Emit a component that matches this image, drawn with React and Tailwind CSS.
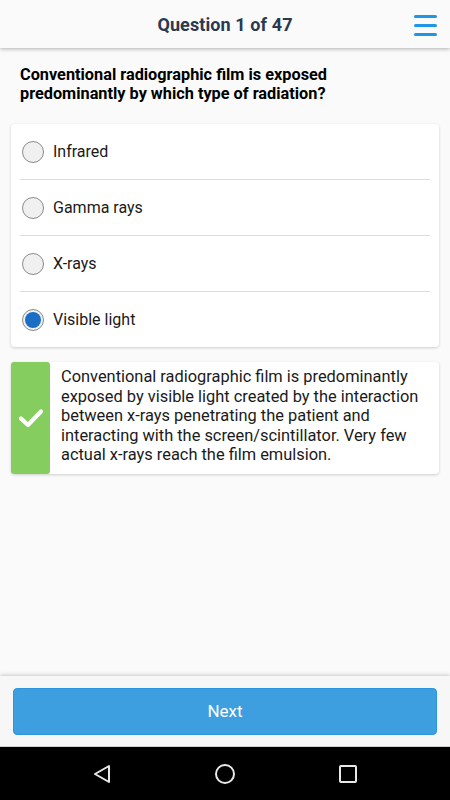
import React from "react";

const options = ["Infrared", "Gamma rays", "X-rays", "Visible light"];

function Radio({ checked }) {
  return (
    <div className="w-[22px] h-[22px] rounded-full border border-[#8a8a8a] bg-[#f0f0f0] flex items-center justify-center shrink-0">
      {checked && <div className="w-[16px] h-[16px] rounded-full bg-[#1a6fc4]" />}
    </div>
  );
}

export default function App() {
  return (
    <div className="w-[450px] h-[800px] flex flex-col bg-[#fafafa] overflow-hidden" style={{ fontFamily: "Roboto, 'Noto Sans', sans-serif" }}>
      <div className="h-[48px] shrink-0 relative flex items-center justify-center bg-[#fafafa] shadow-[0_1px_4px_rgba(0,0,0,0.3)] z-10">
        <span className="text-[18px] font-bold text-[#2a3850] tracking-[0.1px]">Question 1 of 47</span>
        <div className="absolute right-[13px] top-[15px] flex flex-col gap-[6px]">
          <div className="w-[23px] h-[3px] rounded-full bg-[#1e96e6]" />
          <div className="w-[23px] h-[3px] rounded-full bg-[#1e96e6]" />
          <div className="w-[23px] h-[3px] rounded-full bg-[#1e96e6]" />
        </div>
      </div>
      <div className="flex-1 flex flex-col">
        <p className="mx-[20px] pt-[17px] max-w-[370px] text-[16.3px] font-bold leading-[19px] text-black">
          Conventional radiographic film is exposed predominantly by which type of radiation?
        </p>
        <div className="mx-[11px] mt-[21px] bg-white rounded-[4px] shadow-[0_1px_3px_rgba(0,0,0,0.18)]">
          {options.map((o, i) => (
            <div key={o}>
              {i > 0 && <div className="mx-[9px] h-px bg-[#dcdcdc]" />}
              <div className="h-[55px] flex items-center gap-[9px] pl-[11px]">
                <Radio checked={i === 3} />
                <span className="text-[16px] text-[#1a1a1a]">{o}</span>
              </div>
            </div>
          ))}
        </div>
        <div className="mx-[11px] mt-[15px] bg-white rounded-[4px] shadow-[0_1px_3px_rgba(0,0,0,0.18)] flex">
          <div className="w-[39px] shrink-0 bg-[#84cd5e] rounded-[3px] flex items-center justify-center">
            <svg width="26" height="20" viewBox="0 0 26 20">
              <path d="M3 10.5 L10 17 L23 3.5" fill="none" stroke="white" strokeWidth="4.2" strokeLinecap="round" strokeLinejoin="round" />
            </svg>
          </div>
          <p className="pl-[11px] pr-[8px] pt-[5px] pb-[9px] text-[16.4px] leading-[19.6px] text-[#1a1a1a]">
            Conventional radiographic film is predominantly exposed by visible light created by the interaction between x-rays penetrating the patient and interacting with the screen/scintillator. Very few actual x-rays reach the film emulsion.
          </p>
        </div>
      </div>
      <div className="h-[71px] shrink-0 bg-[#f7f7f7] shadow-[0_-1px_4px_rgba(0,0,0,0.2)] px-[13px] pt-[12px] border-b border-[#cfcfcf]">
        <div className="h-[47px] rounded-[4px] bg-[#3d9fe0] border border-[#2b96dd] flex items-center justify-center">
          <span className="text-[17px] text-white pt-[1px]">Next</span>
        </div>
      </div>
      <div className="h-[53px] shrink-0 bg-black flex items-center justify-center gap-[101px]">
        <svg width="22" height="22" viewBox="0 0 22 22">
          <path d="M18 3 L18 19 L4 11 Z" fill="none" stroke="#e8e8e8" strokeWidth="2" strokeLinejoin="round" />
        </svg>
        <svg width="22" height="22" viewBox="0 0 22 22">
          <circle cx="11" cy="11" r="9" fill="none" stroke="#e8e8e8" strokeWidth="2" />
        </svg>
        <svg width="22" height="22" viewBox="0 0 22 22">
          <rect x="3" y="3" width="16" height="16" rx="1" fill="none" stroke="#e8e8e8" strokeWidth="2" />
        </svg>
      </div>
    </div>
  );
}
